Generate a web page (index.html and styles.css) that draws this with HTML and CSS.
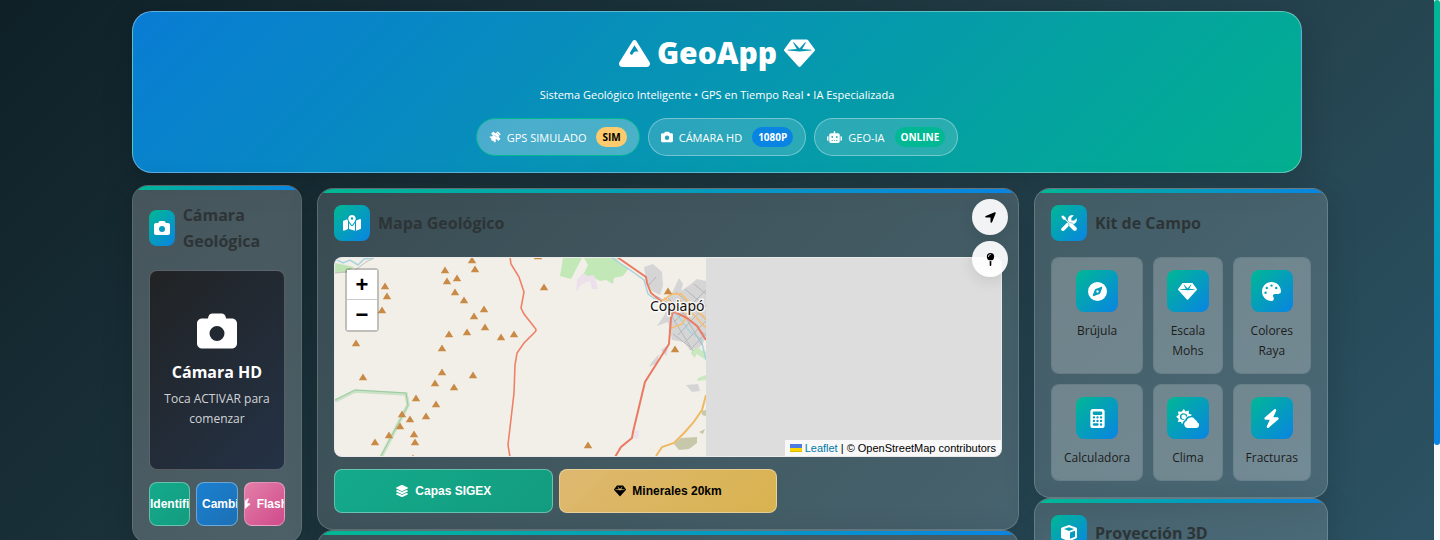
FILE: index.html
```
<!DOCTYPE html>
<html lang="es">
<head>
  <meta charset="UTF-8" />
  <meta name="viewport" content="width=device-width, initial-scale=1.0" />
  <title>GeoApp</title>
  <link rel="stylesheet" href="styles.css">
</head>
<body>
  <svg class="sprite" aria-hidden="true">
    <symbol id="i-mountain" viewBox="0 0 512 512"><path d="M256 32c12.500 0 24.100 6.400 30.700 17L503.400 394.400c5.600 8.900 8.600 19.200 8.600 29.700c0 30.900-25 55.900-55.900 55.900H55.900C25 480 0 455 0 424.100c0-10.500 3-20.800 8.600-29.700L225.200 49c6.600-10.600 18.300-17 30.800-17zm65 192L256 120.400 176.900 246.500l18.300 24.400c6.400 8.500 19.200 8.500 25.600 0l25.600-34.100c6-8.100 15.500-12.800 25.600-12.800h49z"/></symbol>
    <symbol id="i-gem" viewBox="0 0 512 512"><path d="M116.700 33.800c4.500-6.100 11.700-9.800 19.300-9.800H376c7.600 0 14.800 3.600 19.300 9.800l112 152c6.800 9.200 6.100 21.900-1.500 30.400l-232 256c-4.500 5-11 7.900-17.800 7.900s-13.200-2.900-17.800-7.900l-232-256c-7.700-8.500-8.300-21.200-1.500-30.400l112-152zm38.500 39.800c-3.300 2.500-4.200 7-2.100 10.500l57.400 95.600L63.300 192c-4.100 .3-7.300 3.800-7.300 8s3.200 7.600 7.300 8l192 16c.4 0 .9 0 1.300 0l192-16c4.100-.3 7.300-3.800 7.300-8s-3.200-7.600-7.300-8L301.500 179.800l57.400-95.600c2.100-3.500 1.200-8.100-2.100-10.500s-7.900-2-10.700 1L256 172.200 165.900 74.600c-2.800-3-7.400-3.400-10.700-1z"/></symbol>
    <symbol id="i-camera" viewBox="0 0 512 512"><path d="M149.100 64.800L138.700 96H64C28.700 96 0 124.700 0 160V416c0 35.300 28.700 64 64 64H448c35.300 0 64-28.700 64-64V160c0-35.300-28.700-64-64-64H373.300L362.900 64.800C356.400 45.200 338.100 32 317.400 32H194.600c-20.700 0-39 13.200-45.500 32.800zM256 192a96 96 0 1 1 0 192 96 96 0 1 1 0-192z"/></symbol>
    <symbol id="i-bolt" viewBox="0 0 448 512"><path d="M349.400 44.600c5.900-13.700 1.500-29.700-10.600-38.500s-28.600-8-39.900 1.800l-256 224c-10 8.800-13.600 22.900-8.900 35.300S50.700 288 64 288H175.500L98.600 467.400c-5.900 13.700-1.500 29.700 10.600 38.500s28.600 8 39.900-1.800l256-224c10-8.800 13.600-22.900 8.900-35.300s-16.600-20.700-30-20.700H272.500L349.400 44.600z"/></symbol>
    <symbol id="i-compass" viewBox="0 0 512 512"><path d="M256 512A256 256 0 1 0 256 0a256 256 0 1 0 0 512zm50.700-186.900L162.400 380.600c-19.400 7.500-38.500-11.600-31-31l55.500-144.300c3.300-8.500 9.900-15.100 18.400-18.400l144.300-55.500c19.400-7.500 38.500 11.600 31 31L325.100 306.700c-3.200 8.500-9.900 15.100-18.400 18.400zM288 256a32 32 0 1 0 -64 0 32 32 0 1 0 64 0z"/></symbol>
    <symbol id="i-palette" viewBox="0 0 512 512"><path d="M512 256c0 .9 0 1.800 0 2.700c-.4 36.500-33.600 61.300-70.100 61.300H344c-26.500 0-48 21.500-48 48c0 3.400 .4 6.700 1 9.900c2.100 10.200 6.500 20 10.800 29.900c6.100 13.800 12.100 27.500 12.100 42c0 31.800-21.600 60.700-53.400 62c-3.500 .1-7 .2-10.600 .2C114.600 512 0 397.400 0 256S114.600 0 256 0S512 114.600 512 256zM128 288a32 32 0 1 0 -64 0 32 32 0 1 0 64 0zm0-96a32 32 0 1 0 0-64 32 32 0 1 0 0 64zM288 96a32 32 0 1 0 -64 0 32 32 0 1 0 64 0zm96 96a32 32 0 1 0 0-64 32 32 0 1 0 0 64z"/></symbol>
    <symbol id="i-calculator" viewBox="0 0 384 512"><path d="M64 0C28.700 0 0 28.700 0 64V448c0 35.300 28.700 64 64 64H320c35.300 0 64-28.700 64-64V64c0-35.300-28.700-64-64-64H64zM96 64H288c17.700 0 32 14.300 32 32v32c0 17.700-14.300 32-32 32H96c-17.700 0-32-14.300-32-32V96c0-17.700 14.300-32 32-32zm32 160a32 32 0 1 1 -64 0 32 32 0 1 1 64 0zM96 352a32 32 0 1 1 0-64 32 32 0 1 1 0 64zM64 416c0-17.700 14.300-32 32-32h96c17.700 0 32 14.300 32 32s-14.300 32-32 32H96c-17.700 0-32-14.300-32-32zM192 256a32 32 0 1 1 0-64 32 32 0 1 1 0 64zm32 64a32 32 0 1 1 -64 0 32 32 0 1 1 64 0zm64-64a32 32 0 1 1 0-64 32 32 0 1 1 0 64zm32 64a32 32 0 1 1 -64 0 32 32 0 1 1 64 0zM288 448a32 32 0 1 1 0-64 32 32 0 1 1 0 64z"/></symbol>
    <symbol id="i-arrow" viewBox="0 0 448 512"><path d="M429.600 92.100c4.900-11.900 2.100-25.600-7-34.700s-22.800-11.900-34.700-7l-352 144c-14.200 5.800-22.200 20.800-19.300 35.800s16.100 25.800 31.400 25.800H224V432c0 15.300 10.800 28.400 25.800 31.400s30-5.100 35.800-19.300l144-352z"/></symbol>
    <symbol id="i-pin" viewBox="0 0 320 512"><path d="M16 144a144 144 0 1 1 288 0A144 144 0 1 1 16 144zM160 80c8.800 0 16-7.200 16-16s-7.200-16-16-16c-53 0-96 43-96 96c0 8.800 7.200 16 16 16s16-7.200 16-16c0-35.300 28.700-64 64-64zM128 480V317.100c10.400 1.900 21.100 2.900 32 2.900s21.600-1 32-2.900V480c0 17.700-14.300 32-32 32s-32-14.300-32-32z"/></symbol>
    <symbol id="i-layers" viewBox="0 0 576 512"><path d="M264.500 5.200c14.900-6.900 32.100-6.900 47 0l218.600 101c8.500 3.900 13.900 12.400 13.900 21.800s-5.400 17.900-13.900 21.800l-218.600 101c-14.900 6.900-32.100 6.900-47 0L45.900 149.800C37.400 145.800 32 137.300 32 128s5.400-17.900 13.900-21.800L264.500 5.200zM476.900 209.600l53.200 24.600c8.500 3.900 13.900 12.400 13.900 21.800s-5.400 17.900-13.900 21.800l-218.600 101c-14.900 6.900-32.100 6.900-47 0L45.900 277.800C37.400 273.800 32 265.300 32 256s5.400-17.900 13.900-21.800l53.200-24.600 152 70.200c23.400 10.800 50.400 10.800 73.800 0l152-70.200zm-152 198.200l152-70.200 53.200 24.600c8.500 3.900 13.900 12.400 13.900 21.800s-5.400 17.900-13.900 21.800l-218.600 101c-14.900 6.900-32.100 6.900-47 0L45.900 405.800C37.400 401.800 32 393.300 32 384s5.400-17.900 13.900-21.800l53.200-24.600 152 70.200c23.400 10.800 50.400 10.800 73.800 0z"/></symbol>
    <symbol id="i-robot" viewBox="0 0 640 512"><path d="M320 0c17.700 0 32 14.300 32 32V96H472c39.800 0 72 32.200 72 72V440c0 39.800-32.200 72-72 72H168c-39.800 0-72-32.200-72-72V168c0-39.800 32.200-72 72-72H288V32c0-17.700 14.300-32 32-32zM208 384c-8.800 0-16 7.200-16 16s7.200 16 16 16h32c8.800 0 16-7.200 16-16s-7.200-16-16-16H208zm96 0c-8.800 0-16 7.200-16 16s7.200 16 16 16h32c8.800 0 16-7.200 16-16s-7.200-16-16-16H304zm96 0c-8.800 0-16 7.200-16 16s7.200 16 16 16h32c8.800 0 16-7.200 16-16s-7.200-16-16-16H400zM264 256a40 40 0 1 0 -80 0 40 40 0 1 0 80 0zm152 40a40 40 0 1 0 0-80 40 40 0 1 0 0 80zM48 224H64V416H48c-26.500 0-48-21.500-48-48V272c0-26.500 21.500-48 48-48zm544 0c26.500 0 48 21.500 48 48v96c0 26.500-21.500 48-48 48H576V224h16z"/></symbol>
    <symbol id="i-map" viewBox="0 0 576 512"><path d="M408 120c0 54.600-73.100 151.900-105.200 192c-7.700 9.600-22 9.600-29.600 0C241.100 271.900 168 174.600 168 120C168 53.700 221.700 0 288 0s120 53.700 120 120zm8 80.400c3.500-6.900 6.700-13.800 9.600-20.600c.5-1.200 1-2.500 1.500-3.700l116-46.400C558.900 123.400 576 135 576 152V422.800c0 9.800-6 18.600-15.100 22.300L416 503V200.400zM137.600 138.300c2.400 14.100 7.200 28.300 12.800 41.500c2.900 6.800 6.100 13.700 9.600 20.600V451.800L32.900 502.700C17.100 509 0 497.400 0 480.400V209.600c0-9.800 6-18.600 15.100-22.300l122.600-49zM327.800 332c13.900-17.400 35.700-45.700 56.200-77V504.300L192 449.400V255c20.500 31.300 42.300 59.600 56.200 77c20.500 25.600 59.100 25.600 79.600 0zM288 152a40 40 0 1 0 0-80 40 40 0 1 0 0 80z"/></symbol>
    <symbol id="i-tools" viewBox="0 0 16 16">
      <path d="M2 14.200L9 7.200" fill="none" stroke="currentColor" stroke-width="3.600" stroke-linecap="round"/>
      <path d="M8 8.500L6.800 5.200A4.500 4.500 0 0 1 12.800.4L10.400 2.800V5.600H13.200L15.600 3.200A4.500 4.500 0 0 1 10.800 9.200z"/>
      <path d="M0 1.800L1.800 0L5 2.400V4L8.600 7.600L11.200 8L15.400 12.200A2.200 2.200 0 0 1 12.200 15.400L8 11.200L7.600 8.600L4 5H2.400z" stroke="#06a3b4" stroke-width=".5"/>
    </symbol>
    <symbol id="i-satellite" viewBox="0 0 16 16">
      <path d="M5.800.6L8.400 3.200L9.800 1.800L14.200 6.200L12.800 7.600L15.400 10.200L12.400 13.200L9.800 10.600L9 11.200A6 6 0 0 1 8.200 15.600L5.200 12.600A1.200 1.200 0 1 1 3.400 10.800L.4 7.800A6 6 0 0 1 4.800 7L5.400 6.200L2.800 3.600z"/>
      <path d="M7 5L10.600 8.600" fill="none" stroke="#4aafd2" stroke-width=".8"/>
      <path d="M11.600 1.600L14.400 4.400" fill="none" stroke="currentColor" stroke-width="2" stroke-linecap="round"/>
    </symbol>
    <symbol id="i-weather" viewBox="0 0 20 16">
      <path fill-rule="evenodd" d="M6.500 0L8 2.200L10.600 1.300L10.700 4L13.300 4.800L12.200 6C9.800 5.900 8 7.600 7.500 9.300C6.600 9.700 6 10.400 5.700 11.300L5 12.800L4.100 10.700L1.400 11L2.200 8.400L0 6.500L2.200 4.900L1.500 2.100L4.500 2.300zM6.700 3.800A2.800 2.800 0 1 0 6.600 9.200L7 8.400A1.900 1.900 0 1 1 8.300 6.700L9.500 5.900A2.800 2.800 0 0 0 6.700 3.800z"/>
      <path d="M9.400 16A3 3 0 0 1 8.800 10.200A3.900 3.900 0 0 1 16 9A3 3 0 0 1 17.800 11.200A2.500 2.500 0 0 1 17.200 16z"/>
    </symbol>
    <symbol id="i-cube" viewBox="0 0 16 16"><path fill-rule="evenodd" d="M7.300.2Q8 0 8.700.2L15 2.500Q16 2.900 16 3.900V12Q16 13 15 13.500L8.900 15.900Q8 16.100 7.100 15.900L1 13.500Q0 13 0 12V3.900Q0 2.900 1 2.500zM8 2.200L3 4L8 5.900L13 4zM9 7.600V13.700L14 11.700V5.700z"/></symbol>
    <symbol id="i-sync" viewBox="0 0 16 16"><path d="M2 7a6 6 0 0 1 10-3l2 2M14 2v4h-4M14 9a6 6 0 0 1-10 3l-2-2M2 14v-4h4" fill="none" stroke="currentColor" stroke-width="2"/></symbol>
  </svg>

  <div class="container">
    <header class="header">
      <h1><svg><use href="#i-mountain"/></svg> GeoApp <svg><use href="#i-gem"/></svg></h1>
      <p>Sistema Geológico Inteligente • GPS en Tiempo Real • IA Especializada</p>
      <div class="status-bar">
        <div class="status active">
          <svg><use href="#i-satellite"/></svg>
          <span>GPS SIMULADO</span>
          <span class="badge badge-sim">SIM</span>
        </div>
        <div class="status">
          <svg><use href="#i-camera"/></svg>
          <span>CÁMARA HD</span>
          <span class="badge badge-hd">1080P</span>
        </div>
        <div class="status">
          <svg class="wide"><use href="#i-robot"/></svg>
          <span>GEO-IA</span>
          <span class="badge badge-on">ONLINE</span>
        </div>
      </div>
    </header>

    <main class="main-grid">
      <div class="column">
        <section class="card hovered">
          <div class="card-header">
            <div class="card-icon"><svg><use href="#i-camera"/></svg></div>
            <h2>Cámara Geológica</h2>
          </div>
          <div class="camera">
            <svg><use href="#i-camera"/></svg>
            <h3>Cámara HD</h3>
            <p>Toca ACTIVAR para comenzar</p>
          </div>
          <div class="controls">
            <button class="btn btn-green"><svg><use href="#i-gem"/></svg><span>Identificar</span></button>
            <button class="btn btn-blue"><svg><use href="#i-sync"/></svg><span>Cambiar</span></button>
            <button class="btn btn-pink"><svg class="narrow"><use href="#i-bolt"/></svg><span>Flash</span></button>
          </div>
        </section>
      </div>

      <div class="column">
        <section class="card">
          <div class="card-header">
            <div class="card-icon"><svg><use href="#i-map"/></svg></div>
            <h2>Mapa Geológico</h2>
          </div>
          <div class="map-tools">
            <button aria-label="Mi ubicación"><svg><use href="#i-arrow"/></svg></button>
            <button aria-label="Marcar punto"><svg><use href="#i-pin"/></svg></button>
          </div>
          <div class="map">
            <svg class="tiles" viewBox="335 258 371 198">
              <defs>
                <path id="peak" d="M0-3.500L4.200 3.200H-4.200z" fill="#c98a45"/>
              </defs>
              <rect x="335" y="258" width="371" height="198" fill="#f2efe9"/>
              <!-- vegetation -->
              <path d="M335 263L345 265L354 267L346 273H335z" fill="#bfe3b4"/>
              <path d="M563 258H582L571 279L560 276z M584 258H616L621 264L629 268L623 276L614 278L613 284L606 280L600 281L592 277L583 275L588 265z" fill="#c3e8b7"/>
              <path d="M577 280L583 273L588 276L594 275L598 289H592L590 281L582 284L576 292z M634 431L639 430L638 439L634 438z" fill="#ece1eb"/>
              <path d="M690 335L698 338L696 344L701 350L706 352V360L698 355L690 349z M692 349L697 352L695 358L691 354z M698 378L706 375V380L697 381z" fill="#c9e8c0"/>
              <!-- town -->
              <path d="M644 267L653 264L662 272L663 286L660 295L652 291L646 280z M672 293L679 278L683 284L681 291L691 284L697 279L706 281V338L700 347L690 350L684 342L672 340L668 322L657 326L665 314L666 302z M669 344L666 356L661 350z M652 362L659 354L657 363L649 367z M686 385L698 384L700 391L692 392z" fill="#d6d5d5"/>
              <path d="M674 444L681 438L697 437L697 443L689 449L679 450z M702 411L706 410V416L702 415z M699 432L705 429L703 434z" fill="#c7c7a9"/>
              <!-- river -->
              <path d="M335 259L343 263L350 260L358 265L364 259L373 258M612 258L633 272L644 280L648 294L658 301L678 316L690 332L701 339L706 360" fill="none" stroke="#a7d4dd" stroke-width="1.500"/>
              <path d="M335 273L354 271L366 262L374 258" fill="none" stroke="#c2c1bd"/>
              <!-- street grid -->
              <path d="M648 286L656 277M656 296L668 303M668 298L706 336M676 292L706 320M685 289L706 307M694 284L706 294M674 322L706 290M678 335L706 305M684 343L706 321M690 350L706 333M671 315L693 351M681 309L702 345M673 334L690 347" fill="none" stroke="#b5b6bb"/>
              <path d="M662 301L672 294L681 294L706 319M664 298L690 316M680 300L706 328M671 328L682 324L689 313" fill="none" stroke="#f3c078" stroke-width="1.800"/>
              <path d="M706 395L702 410L693 423L684 433L674 443L662 447L656 456" fill="none" stroke="#efb862" stroke-width="2"/>
              <!-- protected area limit -->
              <path d="M335 401L355 391L406 394L408 405L381 457" fill="none" stroke="#c9e2c5" stroke-width="3.500"/>
              <path d="M335 400L355 390L406 393L408 405L381 456" fill="none" stroke="#9cc9a0"/>
              <!-- highways -->
              <path d="M510 257L511 264L519 277L524 292L521 308L524 314L535 328Q537 330 535 332L524 343L517 353L515 365L514 393L508 445L510 457" fill="none" stroke="#ee8066" stroke-width="1.600"/>
              <path d="M617 257L646 277L647 283L651 293L662 302M673 312L671 318L669 344L645 382L633 432L632 438L621 447L615 457M671 313L675 312L687 318L697 326L706 340" fill="none" stroke="#ea7a61" stroke-width="2"/>
              <g id="peaks"></g>
              <text x="650" y="311" class="town">Copiapó</text>
            </svg>
            <div class="zoom">
              <button aria-label="Acercar">+</button>
              <button aria-label="Alejar">−</button>
            </div>
            <div class="attribution">
              <svg viewBox="0 0 12 8"><path fill="#4C7BE1" d="M0 0h12v4H0z"/><path fill="#FFD500" d="M0 4h12v3H0z"/><path fill="#E0BC00" d="M0 7h12v1H0z"/></svg>
              <a href="#">Leaflet</a> | © OpenStreetMap contributors
            </div>
          </div>
          <div class="controls">
            <button class="btn btn-green"><svg class="wide"><use href="#i-layers"/></svg><span>Capas SIGEX</span></button>
            <button class="btn btn-yellow"><svg><use href="#i-gem"/></svg><span>Minerales 20km</span></button>
          </div>
        </section>
        <section class="card grow"></section>
      </div>

      <div class="column">
        <section class="card">
          <div class="card-header">
            <div class="card-icon"><svg><use href="#i-tools"/></svg></div>
            <h2>Kit de Campo</h2>
          </div>
          <div class="kit">
            <button class="tool"><span class="tool-icon"><svg><use href="#i-compass"/></svg></span>Brújula</button>
            <button class="tool"><span class="tool-icon"><svg><use href="#i-gem"/></svg></span>Escala Mohs</button>
            <button class="tool"><span class="tool-icon"><svg><use href="#i-palette"/></svg></span>Colores Raya</button>
            <button class="tool"><span class="tool-icon"><svg><use href="#i-calculator"/></svg></span>Calculadora</button>
            <button class="tool"><span class="tool-icon"><svg class="wide"><use href="#i-weather"/></svg></span>Clima</button>
            <button class="tool"><span class="tool-icon"><svg><use href="#i-bolt"/></svg></span>Fracturas</button>
          </div>
        </section>
        <section class="card grow">
          <div class="card-header">
            <div class="card-icon"><svg><use href="#i-cube"/></svg></div>
            <h2>Proyección 3D</h2>
          </div>
        </section>
      </div>
    </main>
  </div>

  <div class="scrollbar" aria-hidden="true"><div class="scrollbar-thumb" id="thumb"></div></div>

  <script>
    const peaks = [
      [472, 260], [445, 270], [475, 269], [447, 281], [457, 278], [455, 292], [464, 300],
      [484, 309], [474, 316], [485, 327], [467, 332], [449, 334], [501, 337], [514, 334],
      [442, 348], [385, 286], [387, 296], [382, 310], [356, 343], [544, 287], [538, 256],
      [363, 377], [442, 372], [473, 375], [435, 383], [454, 387], [416, 398], [436, 404],
      [402, 414], [410, 419], [426, 416], [400, 426], [389, 435], [375, 442], [414, 434],
      [415, 442], [413, 458], [668, 291], [675, 349], [588, 445]
    ];

    document.getElementById("peaks").innerHTML = peaks
      .map(([x, y]) => `<use href="#peak" x="${x}" y="${y}"/>`)
      .join("");

    const thumb = document.getElementById("thumb");

    function updateThumb() {
      const total = document.documentElement.scrollHeight;
      thumb.style.height = (window.innerHeight / total) * 100 + "%";
      thumb.style.top = (window.scrollY / total) * 100 + "%";
    }

    window.addEventListener("scroll", updateThumb);
    window.addEventListener("resize", updateThumb);
    updateThumb();
  </script>
</body>
</html>
```
FILE: styles.css
```
* {
  box-sizing: border-box;
  margin: 0;
  padding: 0;
}
html {
  scrollbar-width: none;
}
body {
  font-family: 'Segoe UI', 'Open Sans', 'Noto Sans', sans-serif;
  background: linear-gradient(135deg, #0f2027, #203a43, #2c5364) fixed;
  color: #2d3436;
  min-height: 100vh;
  padding-right: 6px;
}
svg {
  fill: currentColor;
}
.sprite {
  display: none;
}
.scrollbar {
  position: fixed;
  top: 0;
  right: 0;
  bottom: 0;
  width: 6px;
  background: #fafafa;
}
.scrollbar-thumb {
  position: absolute;
  width: 100%;
  border-radius: 3px;
  background: linear-gradient(#00b894, #0984e3);
}
.container {
  max-width: 1200px;
  margin: 0 auto;
  padding: 11px 15px;
}
.header {
  background: linear-gradient(135deg, rgba(9, 132, 227, 0.92), rgba(0, 184, 148, 0.92));
  border: 1px solid rgba(255, 255, 255, 0.35);
  border-radius: 20px;
  padding: 16px;
  margin-bottom: 15px;
  text-align: center;
  color: #fff;
  box-shadow: 0 8px 32px rgba(0, 0, 0, 0.15);
}
.header h1 {
  display: flex;
  align-items: center;
  justify-content: center;
  gap: 7px;
  font-size: 30px;
  font-weight: 800;
  line-height: 50px;
  margin-bottom: 8px;
}
.header h1 svg {
  width: 31px;
  height: 31px;
}
.header p {
  font-size: 11px;
  line-height: 18px;
  margin-bottom: 14px;
}
.status-bar {
  display: flex;
  justify-content: center;
  gap: 8px;
}
.status {
  display: flex;
  align-items: center;
  gap: 6px;
  height: 38px;
  padding: 0 12px;
  border: 1px solid rgba(255, 255, 255, 0.35);
  border-radius: 20px;
  background: rgba(255, 255, 255, 0.15);
  font-size: 11px;
  font-weight: 500;
}
.status.active {
  background: rgba(255, 255, 255, 0.27);
  border-color: #00b894;
}
.status svg {
  width: 12px;
  height: 12px;
}
.status svg.wide {
  width: 15px;
}
.badge {
  margin-left: 4px;
  padding: 0 6px;
  border-radius: 10px;
  font-size: 10px;
  font-weight: 700;
  line-height: 20px;
}
.badge-sim {
  background: #fdcb6e;
  color: #000;
}
.badge-hd {
  background: #0984e3;
}
.badge-on {
  background: #00b894;
}
/* the side panel runs a little past the header */
.main-grid {
  display: grid;
  grid-template-columns: 170px minmax(0, 1fr) 294px;
  gap: 15px;
  margin-right: -26px;
}
.column {
  display: flex;
  flex-direction: column;
}
.card {
  position: relative;
  overflow: hidden;
  padding: 16px;
  border: 1px solid rgba(255, 255, 255, 0.3);
  border-radius: 16px;
  background: rgba(255, 255, 255, 0.15);
  background-clip: padding-box;
  box-shadow: 0 8px 32px rgba(0, 0, 0, 0.15);
}
.card::before {
  content: '';
  position: absolute;
  top: 0;
  left: 0;
  right: 0;
  height: 4px;
  background: linear-gradient(90deg, #00b894, #0984e3);
}
.card.hovered {
  background-color: rgba(255, 255, 255, 0.21);
  transform: translateY(-3px);
}
.card.grow {
  min-height: 114px;
  flex-grow: 1;
}
.card-header {
  display: flex;
  align-items: center;
  gap: 8px;
  margin-bottom: 16px;
}
.card-header h2 {
  font-size: 16px;
  font-weight: 700;
  line-height: 26px;
}
.card-icon {
  display: flex;
  align-items: center;
  justify-content: center;
  width: 36px;
  height: 36px;
  border-radius: 8px;
  background: linear-gradient(135deg, #00b894, #0984e3);
  color: #fff;
}
.card-icon svg {
  width: 18px;
  height: 16px;
}
.camera {
  display: flex;
  flex-direction: column;
  align-items: center;
  justify-content: center;
  height: 200px;
  padding: 0 12px;
  border: 1px solid rgba(255, 255, 255, 0.25);
  border-radius: 8px;
  background: linear-gradient(135deg, #212324, #243246);
  color: #fff;
  text-align: center;
}
.camera svg {
  width: 40px;
  height: 40px;
  margin-bottom: 8px;
}
.camera h3 {
  font-size: 16px;
  font-weight: 700;
  line-height: 26px;
  margin-bottom: 4px;
}
.camera p {
  font-size: 12px;
  line-height: 20px;
  color: rgba(255, 255, 255, 0.8);
}
.controls {
  display: grid;
  grid-template-columns: repeat(3, minmax(0, 1fr));
  gap: 6px;
  margin-top: 12px;
}
.btn {
  display: flex;
  align-items: center;
  justify-content: center;
  gap: 6px;
  height: 44px;
  overflow: hidden;
  border: 1px solid rgba(255, 255, 255, 0.35);
  border-radius: 8px;
  color: #fff;
  font-family: 'Liberation Sans', Arial, sans-serif;
  font-size: 12px;
  font-weight: 700;
  white-space: nowrap;
  cursor: pointer;
}
.btn svg {
  flex: none;
  width: 12px;
  height: 12px;
}
.btn svg.wide {
  width: 14px;
}
.btn svg.narrow {
  width: 10px;
}
.btn-green {
  background: linear-gradient(135deg, #14aa8b, #139c80);
}
.btn-blue {
  background: linear-gradient(135deg, #1a80d0, #1d70b5);
}
.btn-pink {
  background: linear-gradient(135deg, #e37fa8, #cf4a8b);
}
.btn-yellow {
  background: linear-gradient(135deg, #deb870, #d9b34f);
  color: #000;
}
.map {
  position: relative;
  height: 200px;
  overflow: hidden;
  border: 1px solid rgba(255, 255, 255, 0.4);
  border-radius: 8px;
  background: #ddd;
}
.tiles {
  display: block;
  width: 371px;
  height: 198px;
}
.town {
  font-family: 'Noto Sans', sans-serif;
  font-size: 14px;
  fill: #111;
  stroke: rgba(255, 255, 255, 0.8);
  stroke-width: 3px;
  paint-order: stroke;
}
.map-tools {
  position: absolute;
  z-index: 2;
  top: 10px;
  right: 10px;
  display: flex;
  flex-direction: column;
  gap: 6px;
}
.map-tools button {
  display: flex;
  align-items: center;
  justify-content: center;
  width: 36px;
  height: 36px;
  border: none;
  border-radius: 50%;
  background: rgba(255, 255, 255, 0.93);
  color: #000;
  box-shadow: 0 4px 15px rgba(0, 0, 0, 0.1);
  cursor: pointer;
}
.map-tools svg {
  width: 13px;
  height: 13px;
}
.zoom {
  position: absolute;
  top: 10px;
  left: 10px;
  border: 2px solid rgba(0, 0, 0, 0.2);
  border-radius: 4px;
  background-clip: padding-box;
}
.zoom button {
  display: block;
  width: 30px;
  height: 30px;
  border: none;
  background: #fff;
  color: #000;
  font: bold 22px/30px 'Liberation Sans', Arial, sans-serif;
  cursor: pointer;
}
.zoom button:first-child {
  border-bottom: 1px solid #ccc;
}
.attribution {
  position: absolute;
  right: 0;
  bottom: 0;
  padding: 0 5px;
  background: rgba(255, 255, 255, 0.8);
  color: #000;
  font: 11px/16px 'Liberation Sans', Arial, sans-serif;
}
.attribution svg {
  width: 12px;
  height: 8px;
}
.attribution a {
  color: #0078a8;
  text-decoration: none;
}
.kit {
  display: grid;
  grid-template-columns: repeat(3, 1fr);
  gap: 10px;
}
.tool {
  display: flex;
  flex-direction: column;
  align-items: center;
  padding: 12px;
  border: 1px solid rgba(255, 255, 255, 0.18);
  border-radius: 8px;
  background: rgba(255, 255, 255, 0.23);
  background-clip: padding-box;
  color: #1c1c1c;
  font-family: inherit;
  font-size: 12px;
  font-weight: 500;
  line-height: 20px;
  cursor: pointer;
}
.tool-icon {
  display: flex;
  align-items: center;
  justify-content: center;
  width: 42px;
  height: 42px;
  margin-bottom: 9px;
  border-radius: 8px;
  background: linear-gradient(135deg, #00b894, #0984e3);
  color: #fff;
}
.tool-icon svg {
  width: 19px;
  height: 19px;
}
.tool-icon svg.wide {
  width: 24px;
}
```
